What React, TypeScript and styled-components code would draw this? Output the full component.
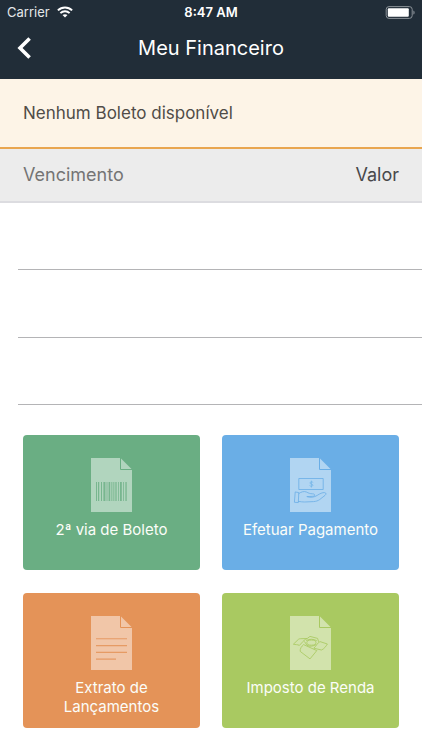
import React from "react";
import styled, { createGlobalStyle } from "styled-components";

const GlobalStyle = createGlobalStyle`
  *, *::before, *::after { box-sizing: border-box; }
  body {
    margin: 0;
    background: #ffffff;
    font-family: Inter, "Liberation Sans", sans-serif;
  }
`;

const Screen = styled.div`
  display: flex;
  flex-direction: column;
`;

const Header = styled.header`
  background: #212d38;
  color: #ffffff;
`;

const StatusBar = styled.div`
  display: grid;
  grid-template-columns: 1fr auto 1fr;
  align-items: center;
  height: 24px;
  padding: 0 7px;
  font-size: 13px;
  line-height: 16px;
`;

const Carrier = styled.div`
  display: flex;
  align-items: center;
  gap: 7px;
  color: #e4e7e9;
`;

const Clock = styled.div`
  font-weight: 600;
`;

const Battery = styled.div`
  display: flex;
  justify-content: flex-end;
`;

const NavBar = styled.div`
  display: grid;
  grid-template-columns: 48px 1fr 48px;
  align-items: center;
  height: 55px;
  padding-bottom: 7px;
`;

const BackButton = styled.button`
  display: flex;
  align-items: center;
  height: 40px;
  padding: 0 0 0 17px;
  border: 0;
  background: none;
  color: inherit;
  cursor: pointer;
`;

const Title = styled.h1`
  margin: 0;
  font-size: 20px;
  font-weight: 400;
  line-height: 24px;
  text-align: center;
`;

const Notice = styled.p`
  margin: 0;
  padding: 22px 23px;
  border-bottom: 2px solid #e9a650;
  background: #fdf4e7;
  color: #504c48;
  font-size: 17px;
  line-height: 24px;
`;

const BillTable = styled.table`
  width: 100%;
  border-collapse: collapse;
`;

const HeadCell = styled.th<{ $end?: boolean }>`
  height: 53px;
  padding: 0 23px;
  border-bottom: 2px solid #dcdce0;
  background: #ececec;
  color: ${(p) => (p.$end ? "#48484a" : "#747474")};
  font-size: 18px;
  font-weight: 400;
  line-height: 24px;
  text-align: ${(p) => (p.$end ? "right" : "left")};
`;

const EmptyCell = styled.td`
  padding: 0 0 0 18px;
`;

const RowLine = styled.div<{ $first?: boolean }>`
  height: ${(p) => (p.$first ? 67 : 68)}px;
  border-bottom: 1px solid #b4b4b6;
`;

const Actions = styled.nav`
  display: grid;
  grid-template-columns: 1fr 1fr;
  gap: 23px 22px;
  padding: 30px 23px 22px;
`;

const ActionCard = styled.button<{ $color: string }>`
  display: flex;
  flex-direction: column;
  align-items: center;
  gap: 8px;
  min-height: 135px;
  padding: 23px 16px 12px;
  border: 0;
  border-radius: 4px;
  background: ${(p) => p.$color};
  color: ${(p) => p.$color};
  font-family: inherit;
  cursor: pointer;
`;

const ActionLabel = styled.span`
  color: #fbfdf8;
  font-size: 15px;
  line-height: 19px;
  text-align: center;
`;

const DocumentIcon = ({ children }: { children: React.ReactNode }) => (
  <svg width="41" height="54" viewBox="0 0 41 54" fill="none" aria-hidden="true">
    <path d="M0 0H29.5L41 11.5V54H0Z" fill="#ffffff" fillOpacity="0.48" />
    <path d="M29.5 0V11.5H41" stroke="currentColor" strokeWidth="1" />
    {children}
  </svg>
);

const bars = [
  [5, 1], [7, 1.2], [10, 1], [12.4, 2], [15.6, 0.8], [17.6, 1.6], [20.4, 0.9],
  [22.4, 0.9], [24.4, 1.2], [27, 0.8], [29, 1.8], [32, 0.8], [34.4, 1.3],
];

const BarcodeArt = () => (
  <g fill="currentColor" fillOpacity="0.8">
    {bars.map(([x, w]) => (
      <rect key={x} x={x} y="24" width={w} height="19" />
    ))}
  </g>
);

const PaymentArt = () => (
  <g stroke="currentColor" strokeOpacity="0.8" strokeWidth="1" strokeLinejoin="round" strokeLinecap="round">
    <rect x="9.2" y="20.5" width="24" height="11" />
    <path d="M23 24.3C22.4 23.6 19.9 23.6 19.9 25C19.9 26.4 23 25.8 23 27.2C23 28.6 20.2 28.5 19.7 27.7M21.4 23V29.2" strokeWidth="0.8" />
    <path d="M5.6 34L8.8 34.6L8.3 44.6L4.8 44.3Z" />
    <path d="M8.8 35.6C11 33.8 14 33 16.4 34C18.5 35 19.8 35.8 22.6 35.8C25.2 35.8 25.4 38.2 22.8 38.3L16.8 38.6C20.5 40 24.5 39.2 27.2 37.4C30 35.6 32.4 34.4 34.6 34.6C36.4 34.8 36.2 36.5 35 37.4L29.6 41.6C28 42.8 26 43.4 23.6 43.6L14.4 44C12.4 44 10.4 43.7 8.4 43.4" />
  </g>
);

const StatementArt = () => (
  <path d="M5 22.7H36M5 29.6H36M5 36.4H36M5 43.1H25" stroke="currentColor" strokeOpacity="0.85" strokeWidth="1.1" />
);

const TaxArt = () => (
  <g stroke="currentColor" strokeOpacity="0.85" strokeWidth="1" strokeLinejoin="round">
    <path d="M3.4 28.2L8.6 23.2C9.2 22.8 9.8 22.7 10.4 22.7L17.2 22.5C14.6 23.6 13 25.2 11.8 26.8L9.4 29.4C7.6 28.4 5.4 28.8 3.4 28.2Z" />
    <path d="M17.2 22.5L20 20.4L27.6 22.4L28.6 25.8" />
    <ellipse cx="21.4" cy="26.6" rx="4.6" ry="2.6" />
    <path d="M16.2 24.6C18.4 22.8 24.4 22.8 26.8 24.8M14.4 25.4L17 29.4C19.4 30.8 23.6 30.4 26.2 28.4" />
    <path d="M23.8 32.2C26 30.6 27.4 26.6 30 25.6L37.4 28C36.2 30 33.8 33.4 31.4 34L23.8 32.2Z" />
    <path d="M13.6 28.6L26.8 34.6L20 42.9L10.2 35.4C9.8 32.6 11.6 30.4 13.6 28.6Z" />
  </g>
);

const actions = [
  { label: "2ª via de Boleto", color: "#6aae83", Art: BarcodeArt },
  { label: "Efetuar Pagamento", color: "#6aaee6", Art: PaymentArt },
  { label: "Extrato de Lançamentos", color: "#e49358", Art: StatementArt },
  { label: "Imposto de Renda", color: "#a9c961", Art: TaxArt },
];

export default function App() {
  return (
    <Screen>
      <GlobalStyle />
      <Header>
        <StatusBar>
          <Carrier>
            Carrier
            <svg width="16" height="12" viewBox="0 0 16 12" fill="none" stroke="#ffffff" strokeWidth="2" aria-hidden="true">
              <path d="M0.9 4.4C4.9 0.5 11.1 0.5 15.1 4.4" />
              <path d="M3.4 7.1C6 4.6 10 4.6 12.6 7.1" />
              <path d="M8 11.6L5.5 9.1C6.9 7.8 9.1 7.8 10.5 9.1Z" fill="#ffffff" stroke="none" />
            </svg>
          </Carrier>
          <Clock>8:47 AM</Clock>
          <Battery>
            <svg width="30" height="13" viewBox="0 0 30 13" fill="none" aria-hidden="true">
              <rect x="1.2" y="0.6" width="26" height="11.8" rx="2.8" stroke="#8b9298" />
              <rect x="2.8" y="2.2" width="21" height="8.6" rx="1" fill="#ffffff" />
              <path d="M28.4 4.4C30 5 30 8 28.4 8.6Z" fill="#8b9298" />
            </svg>
          </Battery>
        </StatusBar>
        <NavBar>
          <BackButton aria-label="Voltar">
            <svg width="15" height="22" viewBox="0 0 15 22" fill="none" aria-hidden="true">
              <path d="M12.6 1.4L3 11L12.6 20.6" stroke="#ffffff" strokeWidth="3.6" />
            </svg>
          </BackButton>
          <Title>Meu Financeiro</Title>
        </NavBar>
      </Header>
      <main>
        <Notice>Nenhum Boleto disponível</Notice>
        <BillTable>
          <thead>
            <tr>
              <HeadCell scope="col">Vencimento</HeadCell>
              <HeadCell scope="col" $end>Valor</HeadCell>
            </tr>
          </thead>
          <tbody>
            {[0, 1, 2].map((row) => (
              <tr key={row}>
                <EmptyCell colSpan={2}>
                  <RowLine $first={row !== 1} />
                </EmptyCell>
              </tr>
            ))}
          </tbody>
        </BillTable>
        <Actions>
          {actions.map(({ label, color, Art }) => (
            <ActionCard key={label} $color={color}>
              <DocumentIcon>
                <Art />
              </DocumentIcon>
              <ActionLabel>{label}</ActionLabel>
            </ActionCard>
          ))}
        </Actions>
      </main>
    </Screen>
  );
}
